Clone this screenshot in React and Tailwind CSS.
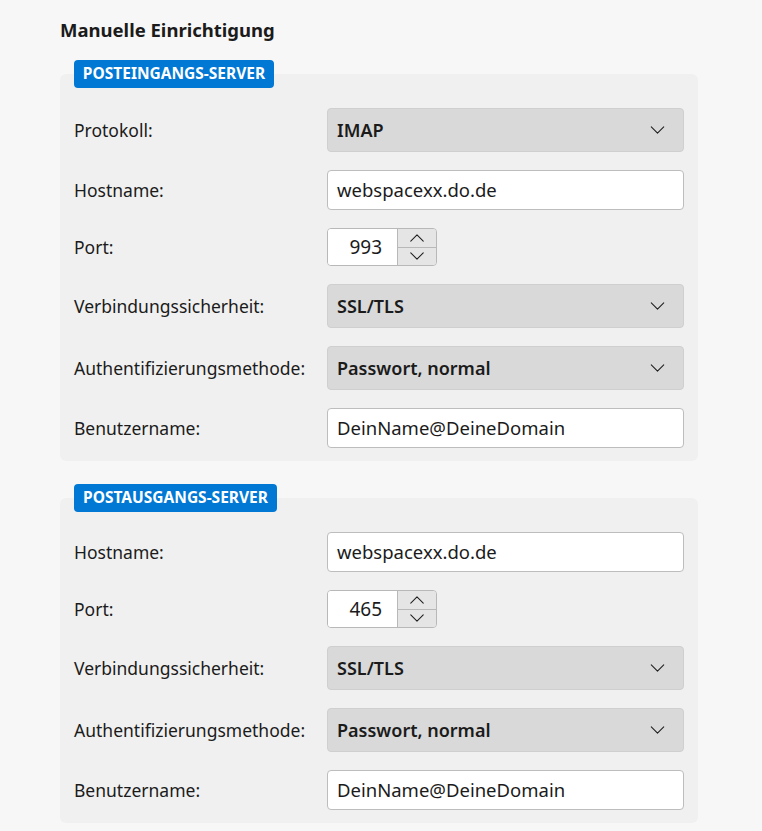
import React from "react";

const font = { fontFamily: '"Noto Sans", "Open Sans", sans-serif' };

function Chevron({ up = false, className = "" }) {
  return (
    <svg viewBox="0 0 16 9" className={className} fill="none" stroke="#1f1f1f" strokeWidth="1.2" strokeLinecap="round" strokeLinejoin="round">
      {up ? <path d="M1 8 L8 1 L15 8" /> : <path d="M1 1 L8 8 L15 1" />}
    </svg>
  );
}

function Row({ label, children }) {
  return (
    <div className="flex items-center">
      <div className="w-[253px] text-[17.5px] text-[#1b1b1b]">{label}</div>
      {children}
    </div>
  );
}

function Select({ value }) {
  return (
    <div className="flex-1 h-[44px] flex items-center justify-between rounded-[4px] bg-[#d9d9d9] border border-[#cfcfcf] pl-[9px] pr-[18px]">
      <span className="text-[18px] font-semibold text-[#1b1b1b]">{value}</span>
      <Chevron className="w-[15px] h-[8px]" />
    </div>
  );
}

function Input({ value }) {
  return (
    <div className="flex-1 h-[40px] flex items-center rounded-[4px] bg-white border border-[#bdbdbd] pl-[9px]">
      <span className="text-[18.5px] text-[#1b1b1b]">{value}</span>
    </div>
  );
}

function Port({ value }) {
  return (
    <div className="h-[38px] w-[110px] flex rounded-[4px] border border-[#b8b8b8] overflow-hidden">
      <div className="w-[69px] bg-white flex items-center justify-end pr-[15px] text-[19px] text-[#1b1b1b]">{value}</div>
      <div className="flex-1 flex flex-col bg-[#e5e5e5] border-l border-[#b8b8b8]">
        <div className="flex-1 flex items-center justify-center border-b border-[#b8b8b8]">
          <Chevron up className="w-[16px] h-[8px]" />
        </div>
        <div className="flex-1 flex items-center justify-center">
          <Chevron className="w-[16px] h-[8px]" />
        </div>
      </div>
    </div>
  );
}

function Section({ title, children, badgeW }) {
  return (
    <div className="relative pt-[14px]">
      <div className={`absolute left-[14px] top-0 h-[28px] ${badgeW} flex items-center justify-center rounded-[4px] bg-[#0078d4] text-white text-[15.5px] font-bold`}>
        {title}
      </div>
      <div className="rounded-[6px] bg-[#f0f0f0] pl-[14px] pr-[14px] pt-[34px] pb-[13px] flex flex-col gap-[18px]">
        {children}
      </div>
    </div>
  );
}

export default function App() {
  return (
    <div className="min-h-[831px] w-[762px] bg-[#f7f7f7] pl-[60px] pr-[64px]" style={font}>
      <div className="pt-[16px] h-[60px] text-[18.5px] font-bold text-[#1b1b1b] leading-[28px]">Manuelle Einrichtigung</div>
      <Section title="POSTEINGANGS-SERVER" badgeW="w-[200px]">
        <Row label="Protokoll:"><Select value="IMAP" /></Row>
        <Row label="Hostname:"><Input value="webspacexx.do.de" /></Row>
        <Row label="Port:"><Port value="993" /></Row>
        <Row label="Verbindungssicherheit:"><Select value="SSL/TLS" /></Row>
        <Row label="Authentifizierungsmethode:"><Select value="Passwort, normal" /></Row>
        <Row label="Benutzername:"><Input value="DeinName@DeineDomain" /></Row>
      </Section>
      <div className="h-[23px]" />
      <Section title="POSTAUSGANGS-SERVER" badgeW="w-[203px]">
        <Row label="Hostname:"><Input value="webspacexx.do.de" /></Row>
        <Row label="Port:"><Port value="465" /></Row>
        <Row label="Verbindungssicherheit:"><Select value="SSL/TLS" /></Row>
        <Row label="Authentifizierungsmethode:"><Select value="Passwort, normal" /></Row>
        <Row label="Benutzername:"><Input value="DeinName@DeineDomain" /></Row>
      </Section>
    </div>
  );
}
